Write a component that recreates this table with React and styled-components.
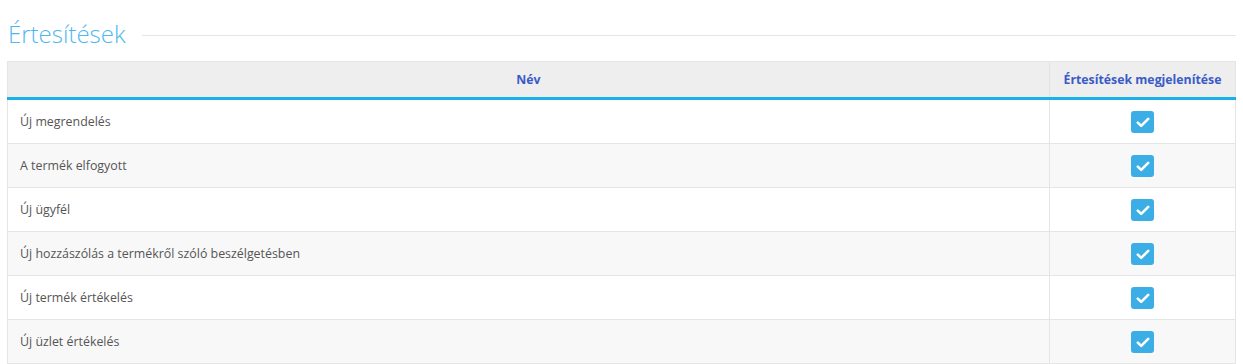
import React from "react";
import styled, { createGlobalStyle } from "styled-components";

const Global = createGlobalStyle`
  html, body { margin: 0; padding: 0; background: #fff; }
  body { font-family: "Open Sans", "Liberation Sans", sans-serif; }
`;

const Page = styled.div`
  padding: 15px 7px 0 7px;
`;

const TitleRow = styled.div`
  display: flex;
  align-items: center;
  gap: 16px;
  height: 38px;
  margin-bottom: 8px;
`;

const Title = styled.h2`
  margin: 0;
  font-weight: 300;
  font-size: 24px;
  line-height: 38px;
  color: #4fb7ee;
  padding-left: 1px;
`;

const Rule = styled.div`
  flex: 1;
  height: 1px;
  background: #e6e6e6;
  margin-top: 2px;
`;

const Table = styled.table`
  width: 100%;
  border-collapse: collapse;
  border: 1px solid #e5e5e5;
  font-size: 12.4px;
`;

const Th = styled.th`
  background: #eeeeee;
  color: #3a5bc7;
  font-weight: 700;
  font-size: 12.3px;
  height: 35px;
  padding: 0 8px;
  text-align: center;
  border-left: 1px solid #e2e2e2;
  border-bottom: 3px solid #1cb0e9;
  width: ${(p) => (p.$narrow ? "169px" : "auto")};
  &:first-child { border-left: none; }
`;

const Tr = styled.tr`
  background: ${(p) => (p.$odd ? "#f8f8f8" : "#ffffff")};
  border-bottom: 1px solid #e5e5e5;
`;

const Td = styled.td`
  height: 43px;
  padding: 0 12px;
  color: #555;
  text-align: ${(p) => (p.$center ? "center" : "left")};
  border-left: ${(p) => (p.$center ? "1px solid #e5e5e5" : "none")};
  vertical-align: middle;
`;

const Check = styled.span`
  display: inline-flex;
  align-items: center;
  justify-content: center;
  width: 23px;
  height: 22px;
  border-radius: 3px;
  background: #3baee6;
  vertical-align: middle;
  margin-top: 1px;
`;

const rows = [
  "Új megrendelés",
  "A termék elfogyott",
  "Új ügyfél",
  "Új hozzászólás a termékről szóló beszélgetésben",
  "Új termék értékelés",
  "Új üzlet értékelés",
];

export default function App() {
  return (
    <Page>
      <Global />
      <TitleRow>
        <Title>Értesítések</Title>
        <Rule />
      </TitleRow>
      <Table>
        <thead>
          <tr>
            <Th>Név</Th>
            <Th $narrow>Értesítések megjelenítése</Th>
          </tr>
        </thead>
        <tbody>
          {rows.map((r, i) => (
            <Tr key={r} $odd={i % 2 === 1}>
              <Td>{r}</Td>
              <Td $center>
                <Check>
                  <svg width="14" height="11" viewBox="0 0 14 11">
                    <path
                      d="M1.8 5.6 L5.2 8.9 L12.2 1.9"
                      fill="none"
                      stroke="#fff"
                      strokeWidth="2.6"
                      strokeLinecap="round"
                      strokeLinejoin="round"
                    />
                  </svg>
                </Check>
              </Td>
            </Tr>
          ))}
        </tbody>
      </Table>
    </Page>
  );
}
